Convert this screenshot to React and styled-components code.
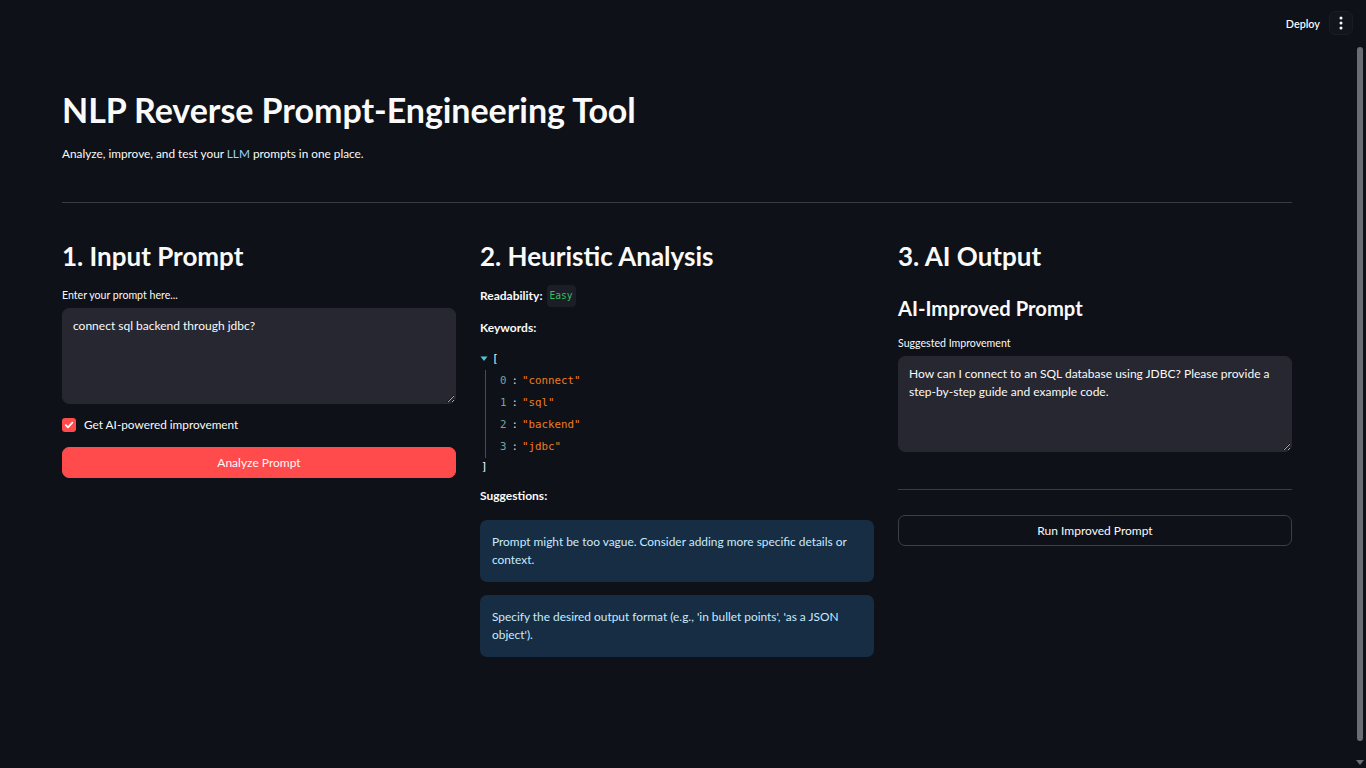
import React from "react";
import styled, { createGlobalStyle } from "styled-components";

const GlobalStyle = createGlobalStyle`
  html, body {
    margin: 0;
    padding: 0;
    background: #0e1117;
    color: #fafafa;
    font-family: Lato, "Noto Sans", sans-serif;
    overflow: hidden;
  }
  * { box-sizing: border-box; }
`;

const Shell = styled.div`
  position: relative;
  height: 100vh;
  display: flex;
  flex-direction: column;
  background: #0e1117;
`;

const Header = styled.header`
  height: 46px;
  flex: none;
  display: flex;
  align-items: center;
  justify-content: flex-end;
  gap: 3px;
  padding-right: 13px;
`;

const DeployLink = styled.span`
  font-size: 10.8px;
  font-weight: 600;
  color: #fafafa;
  padding: 0 6px;
`;

const MenuButton = styled.div`
  width: 24px;
  height: 24px;
  border-radius: 6px;
  background: #12151c;
  border: 1px solid #1a1d25;
  display: flex;
  align-items: center;
  justify-content: center;
`;

const Main = styled.main`
  flex: 1;
  overflow: hidden;
`;

const ScrollThumb = styled.div`
  position: absolute;
  right: 3px;
  top: 47px;
  width: 6px;
  height: 694px;
  border-radius: 3px;
  background: #6c6d72;
`;

const ScrollArrow = styled.div`
  position: absolute;
  right: 2px;
  bottom: 3px;
  width: 0;
  height: 0;
  border-left: 4px solid transparent;
  border-right: 4px solid transparent;
  border-top: 5px solid #6c6d72;
`;

const Block = styled.div`
  padding: 42px 74px 140px 62px;
`;

const Title = styled.h1`
  margin: 0;
  font-size: 34px;
  line-height: 43px;
  font-weight: 700;
  letter-spacing: -0.05px;
`;

const Subtitle = styled.p`
  margin: 13px 0 0;
  font-size: 11.8px;
  line-height: 20px;
`;

const Accent = styled.span`
  color: #9fd3ff;
`;

const Divider = styled.hr`
  border: none;
  border-top: 1px solid #3a3c42;
  margin: ${(p) => p.$top || 0}px 0 0;
`;

const Columns = styled.div`
  display: grid;
  grid-template-columns: repeat(3, 1fr);
  gap: 24px;
  margin-top: 36px;
`;

const Column = styled.section`
  display: flex;
  flex-direction: column;
  min-width: 0;
`;

const H2 = styled.h2`
  margin: 0;
  font-size: 26px;
  line-height: 34px;
  font-weight: 700;
`;

const H3 = styled.h3`
  margin: ${(p) => p.$top || 0}px 0 0;
  font-size: 20.2px;
  line-height: 26px;
  font-weight: 700;
`;

const Label = styled.label`
  display: block;
  margin-top: ${(p) => p.$top || 0}px;
  font-size: 10.6px;
  line-height: 18px;
  color: #fafafa;
`;

const TextArea = styled.textarea`
  display: block;
  margin-top: 4px;
  width: 100%;
  height: 96px;
  resize: vertical;
  background: #262730;
  color: #fafafa;
  border: 1px solid #262730;
  border-radius: 7px;
  padding: 8px 10px;
  font-family: Lato, "Noto Sans", sans-serif;
  font-size: 12px;
  line-height: 18px;
  outline: none;
`;

const CheckRow = styled.div`
  display: flex;
  align-items: center;
  gap: 8px;
  margin-top: 14px;
  font-size: 11.8px;
  line-height: 14px;
`;

const CheckBox = styled.span`
  width: 14px;
  height: 14px;
  border-radius: 3px;
  background: #ff4b4b;
  display: flex;
  align-items: center;
  justify-content: center;
`;

const Button = styled.button`
  display: block;
  width: 100%;
  height: 31px;
  margin-top: ${(p) => p.$top || 0}px;
  border-radius: 7px;
  font-family: Lato, "Noto Sans", sans-serif;
  font-size: 12px;
  color: #fafafa;
  cursor: pointer;
  background: ${(p) => (p.$primary ? "#ff4b4b" : "#0e1117")};
  border: 1px solid ${(p) => (p.$primary ? "#ff4b4b" : "#3d3f46")};
`;

const Para = styled.div`
  margin-top: ${(p) => p.$top || 0}px;
  font-size: 12px;
  line-height: 18px;
  display: flex;
  align-items: center;
  gap: 4px;
`;

const Bold = styled.strong`
  font-weight: 700;
`;

const Code = styled.code`
  font-family: "DejaVu Sans Mono", "Liberation Mono", monospace;
  font-size: 9.6px;
  color: #3bbd60;
  background: #1b1e26;
  border-radius: 4px;
  padding: 2px 3px;
`;

const JsonTree = styled.div`
  margin-top: 11px;
  font-family: "DejaVu Sans Mono", "Liberation Mono", monospace;
  font-size: 10.8px;
  line-height: 22px;
`;

const JsonHead = styled.div`
  display: flex;
  align-items: center;
  gap: 4px;
  color: #fafafa;
`;

const JsonBody = styled.div`
  margin-left: 5px;
  border-left: 1px solid #4a4c52;
  padding-left: 14px;
`;

const JsonRow = styled.div`
  display: flex;
`;

const JsonIndex = styled.span`
  color: #6fa8a4;
`;

const JsonColon = styled.span`
  color: #d8d8d8;
  margin: 0 4px 0 5px;
`;

const JsonString = styled.span`
  color: #f07b22;
`;

const JsonClose = styled.div`
  color: #fafafa;
  line-height: 18px;
  padding-left: 1px;
`;

const InfoBox = styled.div`
  margin-top: ${(p) => p.$top || 0}px;
  background: #172d43;
  color: #c7ebff;
  border-radius: 7px;
  padding: 13px 12px;
  font-size: 11.9px;
  line-height: 18px;
`;

const Dots = () => (
  <svg width="4" height="14" viewBox="0 0 4 14">
    <circle cx="2" cy="2" r="1.5" fill="#fafafa" />
    <circle cx="2" cy="7" r="1.5" fill="#fafafa" />
    <circle cx="2" cy="12" r="1.5" fill="#fafafa" />
  </svg>
);

const Check = () => (
  <svg width="10" height="10" viewBox="0 0 10 10">
    <path d="M1.8 5.2 L4 7.3 L8.3 2.6" stroke="#fff" strokeWidth="1.8" fill="none" strokeLinecap="round" strokeLinejoin="round" />
  </svg>
);

const Caret = () => (
  <svg width="8" height="6" viewBox="0 0 8 6">
    <path d="M0.5 0.5 L7.5 0.5 L4 5 Z" fill="#4fc3d9" />
  </svg>
);

const keywords = ["connect", "sql", "backend", "jdbc"];

export default function App() {
  return (
    <Shell>
      <GlobalStyle />
      <Header>
        <DeployLink>Deploy</DeployLink>
        <MenuButton>
          <Dots />
        </MenuButton>
      </Header>
      <Main>
        <Block>
          <Title>NLP Reverse Prompt-Engineering Tool</Title>
          <Subtitle>
            Analyze, improve, and test your <Accent>LLM</Accent> prompts in one place.
          </Subtitle>
          <Divider $top={38} />
          <Columns>
            <Column>
              <H2>1. Input Prompt</H2>
              <Label $top={13}>Enter your prompt here...</Label>
              <TextArea readOnly value="connect sql backend through jdbc?" />
              <CheckRow>
                <CheckBox>
                  <Check />
                </CheckBox>
                Get AI-powered improvement
              </CheckRow>
              <Button $primary $top={15}>Analyze Prompt</Button>
            </Column>
            <Column>
              <H2>2. Heuristic Analysis</H2>
              <Para $top={12}>
                <Bold>Readability:</Bold> <Code>Easy</Code>
              </Para>
              <Para $top={12}>
                <Bold>Keywords:</Bold>
              </Para>
              <JsonTree>
                <JsonHead>
                  <Caret />
                  <span>[</span>
                </JsonHead>
                <JsonBody>
                  {keywords.map((k, i) => (
                    <JsonRow key={k}>
                      <JsonIndex>{i}</JsonIndex>
                      <JsonColon>:</JsonColon>
                      <JsonString>"{k}"</JsonString>
                    </JsonRow>
                  ))}
                </JsonBody>
                <JsonClose>]</JsonClose>
              </JsonTree>
              <Para $top={11}>
                <Bold>Suggestions:</Bold>
              </Para>
              <InfoBox $top={15}>
                Prompt might be too vague. Consider adding more specific details or context.
              </InfoBox>
              <InfoBox $top={13}>
                Specify the desired output format (e.g., 'in bullet points', 'as a JSON object').
              </InfoBox>
            </Column>
            <Column>
              <H2>3. AI Output</H2>
              <H3 $top={22}>AI-Improved Prompt</H3>
              <Label $top={13}>Suggested Improvement</Label>
              <TextArea
                readOnly
                value="How can I connect to an SQL database using JDBC? Please provide a step-by-step guide and example code."
              />
              <Divider $top={37} />
              <Button $top={25}>Run Improved Prompt</Button>
            </Column>
          </Columns>
        </Block>
      </Main>
      <ScrollThumb />
      <ScrollArrow />
    </Shell>
  );
}
